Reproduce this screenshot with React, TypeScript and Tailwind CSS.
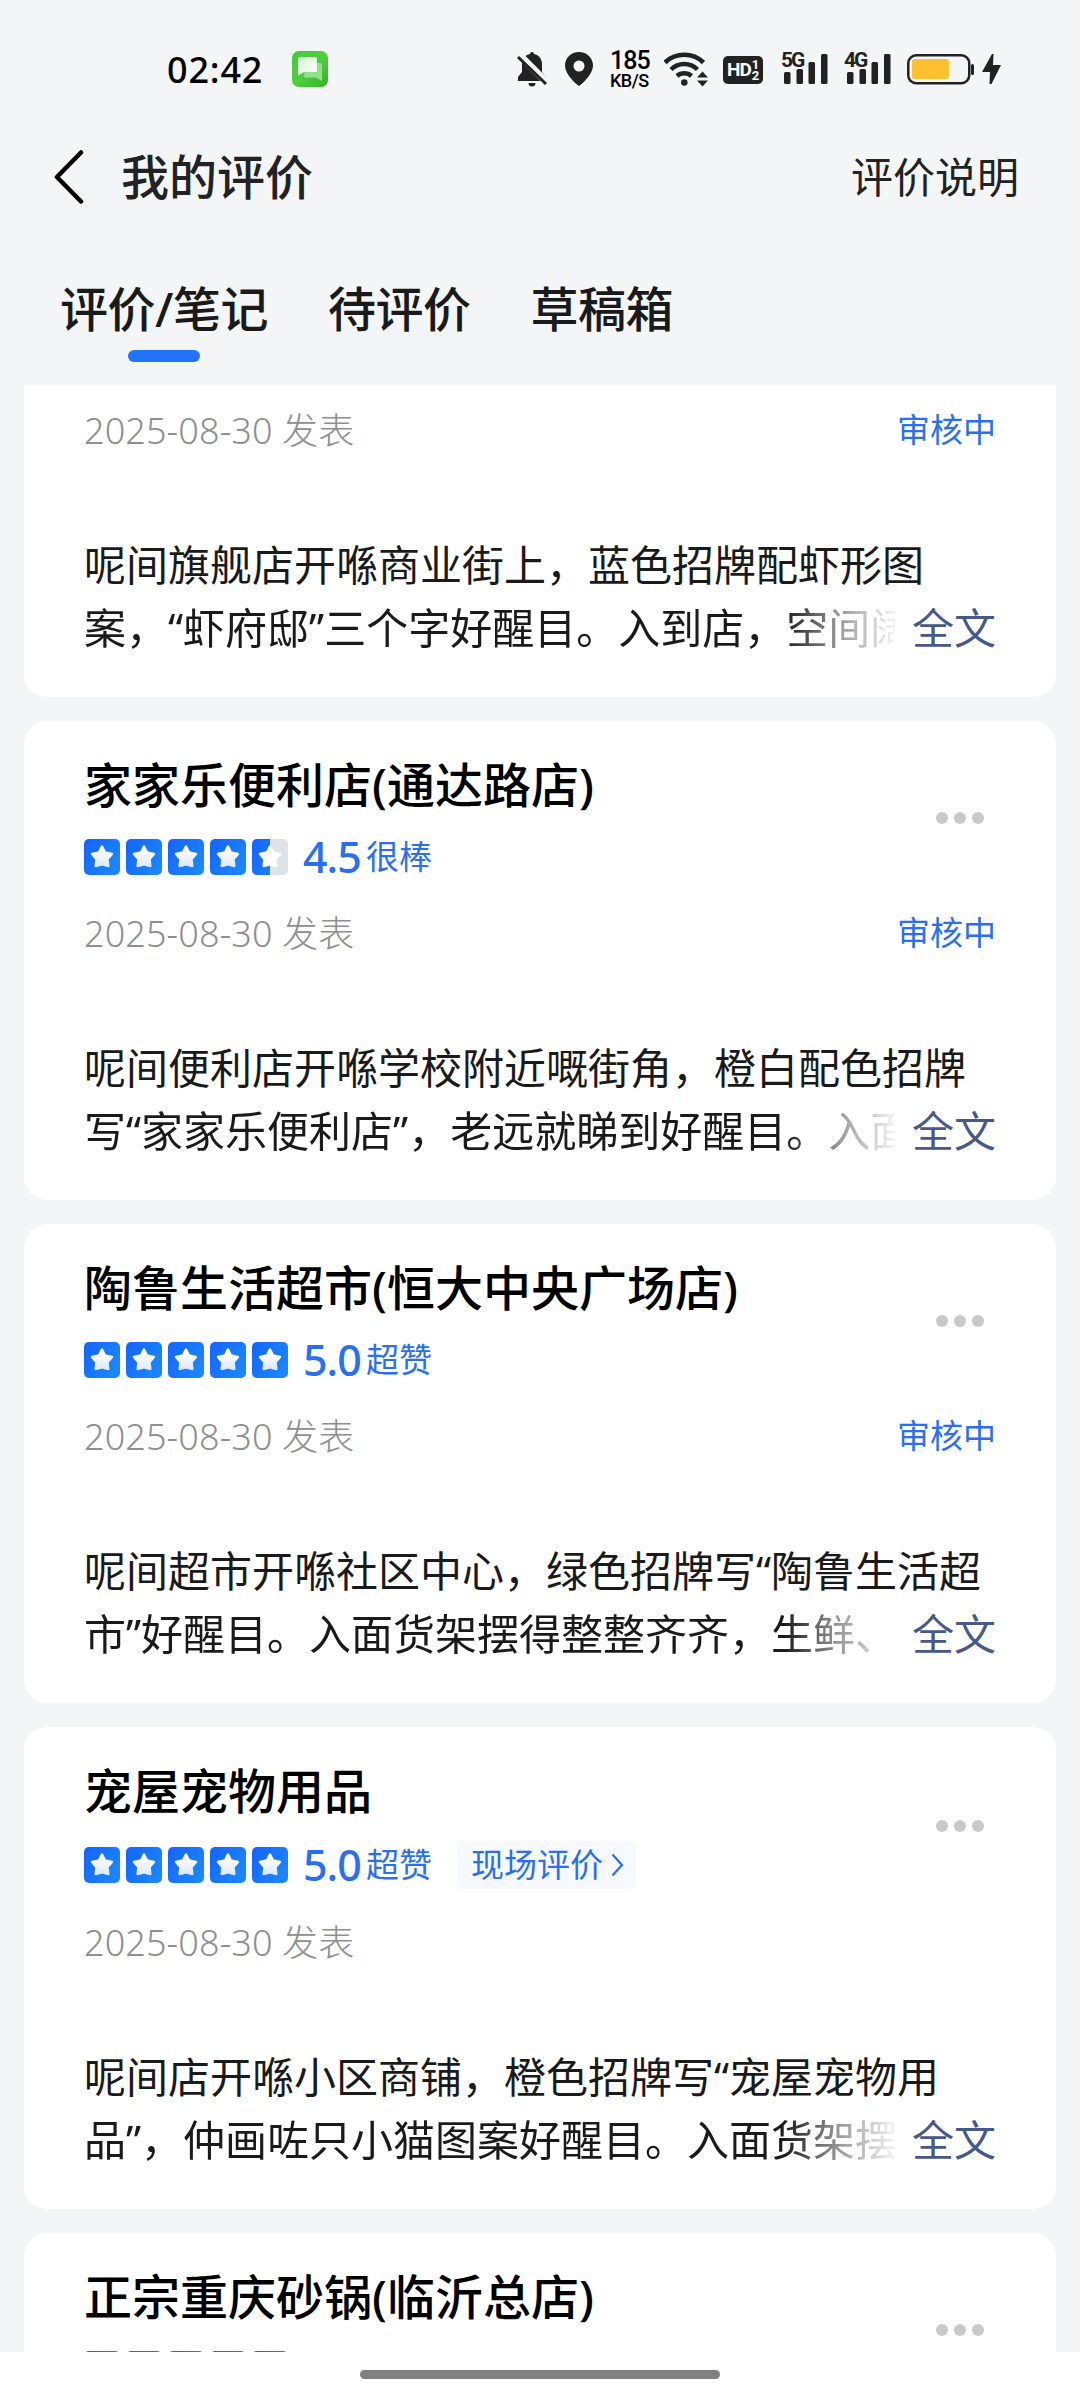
import { clsx } from "clsx";

interface Review {
  id: string;
  shop?: string;
  score?: number;
  level?: string;
  onSite?: boolean;
  date: string;
  status?: string;
  lines?: [string, string];
}

const TABS = ["评价/笔记", "待评价", "草稿箱"];

const REVIEWS: Review[] = [
  {
    id: "xiafudi",
    date: "2025-08-30",
    status: "审核中",
    lines: [
      "呢间旗舰店开喺商业街上，蓝色招牌配虾形图",
      "案，“虾府邸”三个字好醒目。入到店，空间阔",
    ],
  },
  {
    id: "jiajiale",
    shop: "家家乐便利店(通达路店)",
    score: 4.5,
    level: "很棒",
    date: "2025-08-30",
    status: "审核中",
    lines: [
      "呢间便利店开喺学校附近嘅街角，橙白配色招牌",
      "写“家家乐便利店”，老远就睇到好醒目。入面",
    ],
  },
  {
    id: "taolu",
    shop: "陶鲁生活超市(恒大中央广场店)",
    score: 5,
    level: "超赞",
    date: "2025-08-30",
    status: "审核中",
    lines: [
      "呢间超市开喺社区中心，绿色招牌写“陶鲁生活超",
      "市”好醒目。入面货架摆得整整齐齐，生鲜、",
    ],
  },
  {
    id: "chongwu",
    shop: "宠屋宠物用品",
    score: 5,
    level: "超赞",
    onSite: true,
    date: "2025-08-30",
    lines: [
      "呢间店开喺小区商铺，橙色招牌写“宠屋宠物用",
      "品”，仲画咗只小猫图案好醒目。入面货架摆",
    ],
  },
  {
    id: "shaguo",
    shop: "正宗重庆砂锅(临沂总店)",
    score: 5,
    level: "超赞",
    date: "2025-08-30",
  },
];

function Signal({ label }: { label: string }) {
  return (
    <div className="relative h-9 w-[47px]">
      <span className="absolute top-0 left-0 font-['Roboto'] text-[21px] leading-[18px] font-bold tracking-[-2px]">
        {label}
      </span>
      <svg className="h-9 w-[47px]" viewBox="0 0 47 36" fill="#222">
        <rect x="3" y="21" width="6.5" height="12" rx="1.5" />
        <rect x="15.5" y="18" width="6.5" height="15" rx="1.5" />
        <rect x="27.5" y="11" width="6.5" height="22" rx="1.5" />
        <rect x="40" y="3" width="6.5" height="30" rx="1.5" />
      </svg>
    </div>
  );
}

function StatusBar() {
  return (
    <div className="flex h-[138px] shrink-0 items-start pt-[51px] pr-[78px] pl-[167px] text-[#222]">
      <span className="w-[125px] pt-px text-[36px] leading-9 font-medium tracking-[0.8px] text-black">
        02:42
      </span>
      <svg className="size-9" viewBox="0 0 36 36">
        <defs>
          <linearGradient id="msg" x1="0" y1="0" x2="1" y2="1">
            <stop offset="0" stopColor="#45c93a" />
            <stop offset="0.5" stopColor="#4fcf3f" />
            <stop offset="1" stopColor="#35b129" />
          </linearGradient>
          <linearGradient id="bubble" x1="0" y1="0" x2="1" y2="1">
            <stop offset="0" stopColor="#d3f5cf" />
            <stop offset="1" stopColor="#fff" />
          </linearGradient>
        </defs>
        <rect width="36" height="36" rx="7" fill="url(#msg)" />
        <path
          d="M13 12h15a2 2 0 0 1 2 2v16l-6-3.500H13a1 1 0 0 1-1-1z"
          fill="#93df8b"
        />
        <path
          d="M8 6h15a2 2 0 0 1 2 2v12a1 1 0 0 1-1 1H12l-6 3.500V8a2 2 0 0 1 2-2z"
          fill="url(#bubble)"
        />
      </svg>

      <div className="ml-auto flex items-start">
        <svg className="mr-4 h-9 w-[34px]" viewBox="0 0 34 36" fill="#222">
          <path d="M17 1a2 2 0 0 1 2 2c5 1 8 5 8 10v8l4 5v4H3v-4l4-5v-8c0-5 3-9 8-10a2 2 0 0 1 2-2zM13.500 32h7a3.500 3.500 0 0 1-7 0z" />
          <path d="M3.500 3l28 28" stroke="#f4f5f7" strokeWidth="7" />
          <path d="M3 6l28 27" stroke="#222" strokeWidth="3" />
        </svg>
        <svg className="mr-[17px] h-9 w-7" viewBox="0 0 28 36">
          <path
            fillRule="evenodd"
            fill="#222"
            d="M14 1C6 1 0 7 0 14.500 0 21 6 29 14 35c8-6 14-14 14-20.500C28 7 22 1 14 1zm0 8.500a5.500 5.500 0 1 0 0 11 5.500 5.500 0 0 0 0-11z"
          />
        </svg>
        <div className="mr-[12px] flex w-[42px] flex-col font-['Roboto'] font-medium text-black">
          <span className="text-[25px] leading-[20px] tracking-[-1px]">185</span>
          <span className="mt-px text-[18px] leading-[17px] tracking-[-0.5px]">
            KB/S
          </span>
        </div>
        <svg className="mr-[15px] h-9 w-11" viewBox="0 0 44 36">
          <g fill="none" stroke="#222" strokeWidth="4.5">
            <path d="M1 11.500a28 28 0 0 1 38.500 0" />
            <path d="M7 18.500a19 19 0 0 1 26.500 0" />
            <path d="M13 25a11 11 0 0 1 14.500 0" />
          </g>
          <circle cx="20.300" cy="31.500" r="3.300" fill="#222" />
          <path d="M33 26.500l5.500-6 5.500 6zM33 29.500h11l-5.500 6z" fill="#222" />
        </svg>
        <div className="mt-[5px] mr-[18px] flex h-7 w-10 items-center rounded-[5px] bg-[#222] pl-1 font-['Roboto'] font-bold text-white">
          <span className="text-[19px] leading-7 tracking-[-1px]">HD</span>
          <span className="flex flex-col pl-px text-[13px] leading-[11px]">
            <span>1</span>
            <span>2</span>
          </span>
        </div>
        <div className="flex gap-4">
          <Signal label="5G" />
          <Signal label="4G" />
        </div>
        <svg className="ml-4 h-9 w-[95px]" viewBox="0 0 95 36">
          <rect
            x="1.250"
            y="4.250"
            width="61"
            height="28"
            rx="8"
            fill="none"
            stroke="#222"
            strokeWidth="2.500"
          />
          <rect x="5" y="8" width="37" height="20" rx="3" fill="#fdc02f" />
          <rect x="64" y="13" width="3" height="11" rx="1.500" fill="#222" />
          <path d="M85 3L75 21h8l-0.500 12h2L94 14h-8l0.500-11z" fill="#222" />
        </svg>
      </div>
    </div>
  );
}

function Header() {
  return (
    <header className="flex h-[78px] shrink-0 items-center pr-[61px] pl-[53px]">
      <svg className="h-[54px] w-[31px]" viewBox="0 0 31 54">
        <path
          d="M28 2.500L4 27l24 24.500"
          fill="none"
          stroke="#000"
          strokeWidth="4.500"
          strokeLinecap="round"
          strokeLinejoin="round"
        />
      </svg>
      <h1 className="ml-[37px] text-[48px] leading-[78px] font-medium text-[#222]">
        我的评价
      </h1>
      <a className="ml-auto text-[42px] leading-[76px] text-[#222]">评价说明</a>
    </header>
  );
}

function Tabs() {
  return (
    <nav className="flex h-[169px] shrink-0 gap-[60px] pt-[60px] pl-[60px]">
      {TABS.map((tab, i) => (
        <div key={tab} className="flex flex-col items-center">
          <span className="text-[48px] leading-[66px] font-medium tracking-[-0.5px] text-[#1a1a1a]">
            {tab}
          </span>
          {i === 0 && (
            <span className="mt-2 h-3 w-[72px] rounded-full bg-[#2173f9]" />
          )}
        </div>
      ))}
    </nav>
  );
}

function Star({ fill }: { fill: number }) {
  return (
    <svg className="size-9" viewBox="0 0 36 36">
      <defs>
        <linearGradient id="tile" x1="0" y1="0" x2="1" y2="0.6">
          <stop offset="0" stopColor="#1463ff" />
          <stop offset="1" stopColor="#1a86ff" />
        </linearGradient>
        <linearGradient id="star" x1="0" y1="0" x2="0" y2="1">
          <stop offset="0.2" stopColor="#fff" />
          <stop offset="1" stopColor="#dce8fc" />
        </linearGradient>
        <clipPath id="half">
          <rect width="18" height="36" />
        </clipPath>
      </defs>
      {fill < 1 && <rect width="36" height="36" rx="5" fill="#dfe3e8" />}
      <rect
        width="36"
        height="36"
        rx="5"
        fill="url(#tile)"
        clipPath={fill < 1 ? "url(#half)" : undefined}
      />
      <path
        d="M18 7.500l3 6 7 1.500-4.500 5.200 0.800 6.800-6.300-1.800-6.300 1.800 0.800-6.800-4.500-5.200 7-1.500z"
        fill={fill < 1 ? "#fff" : "url(#star)"}
        stroke={fill < 1 ? "#fff" : "url(#star)"}
        strokeWidth="2.500"
        strokeLinejoin="round"
      />
    </svg>
  );
}

function Rating({ review }: { review: Review }) {
  const score = review.score ?? 0;

  return (
    <div
      className={clsx(
        "mt-[18px] flex shrink-0 items-center text-[#2a6ff0]",
        review.onSite ? "h-[51px]" : "h-12",
      )}
    >
      <div className="flex gap-1.5">
        {[0, 1, 2, 3, 4].map((n) => (
          <Star key={n} fill={Math.min(1, score - n)} />
        ))}
      </div>
      <span className="ml-[15px] w-[63px] text-[43px] leading-[48px] font-medium tracking-[-1px]">
        {score.toFixed(1)}
      </span>
      <span className="text-[33px] leading-[48px]">{review.level}</span>
      {review.onSite && (
        <a className="ml-[25px] flex h-12 items-center rounded-md bg-[#f6f9ff] pr-3 pl-3.5">
          <span className="text-[33px] leading-[48px]">现场评价</span>
          <svg className="ml-2 h-6 w-[13px]" viewBox="0 0 13 24">
            <path
              d="M1.500 1.500L11 12 1.500 22.500"
              fill="none"
              stroke="#2a6ff0"
              strokeWidth="2.200"
            />
          </svg>
        </a>
      )}
    </div>
  );
}

function ReviewCard({ review }: { review: Review }) {
  return (
    <article
      className={clsx(
        "relative flex shrink-0 flex-col bg-white px-[60px] pb-[38px]",
        review.shop ? "rounded-3xl pt-[34px]" : "rounded-b-3xl pt-[25px]",
      )}
    >
      {review.shop && (
        <>
          <h2 className="text-[48px] leading-[60px] font-medium text-black">
            {review.shop}
          </h2>
          <Rating review={review} />
          {/* more menu */}
          <button
            className={clsx(
              "absolute right-[72px] flex gap-1.5",
              review.onSite ? "top-[93px]" : "top-[91px]",
            )}
          >
            <span className="size-3 rounded-full bg-[#c9c9c9]" />
            <span className="size-3 rounded-full bg-[#c9c9c9]" />
            <span className="size-3 rounded-full bg-[#c9c9c9]" />
          </button>
        </>
      )}

      <div
        className={clsx(
          "flex h-10 items-center justify-between leading-10",
          review.shop && "mt-8",
        )}
      >
        <span className="pt-0.5 text-[36px] font-light tracking-[0.1px] text-[#8f8f8f]">
          {review.date} 发表
        </span>
        {review.status && (
          <span className="text-[33px] text-[#2a6ff0]">{review.status}</span>
        )}
      </div>

      {review.lines && (
        <div className="mt-[83px] text-[42px] leading-[63px] text-[#1a1a1a]">
          <p className="whitespace-nowrap">{review.lines[0]}</p>
          <div className="flex justify-between">
            <p className="w-[811px] overflow-hidden bg-[linear-gradient(to_right,#1a1a1a_700px,#999_755px,#fff_818px)] bg-clip-text whitespace-nowrap text-transparent">
              {review.lines[1]}
            </p>
            <a className="text-[#47598a]">全文</a>
          </div>
        </div>
      )}
    </article>
  );
}

export default function App() {
  return (
    <div
      lang="zh-CN"
      className="flex h-[2400px] w-[1080px] flex-col overflow-hidden bg-[#f4f5f7] font-['Noto_Sans','Noto_Sans_CJK_SC',sans-serif]"
    >
      <StatusBar />
      <Header />
      <Tabs />
      <main className="flex h-[1967px] shrink-0 flex-col gap-6 overflow-hidden px-6">
        {REVIEWS.map((review) => (
          <ReviewCard key={review.id} review={review} />
        ))}
      </main>
      <footer className="flex h-12 shrink-0 justify-center bg-white pt-[18px]">
        <span className="h-[9px] w-[360px] rounded-full bg-[#808080]" />
      </footer>
    </div>
  );
}
